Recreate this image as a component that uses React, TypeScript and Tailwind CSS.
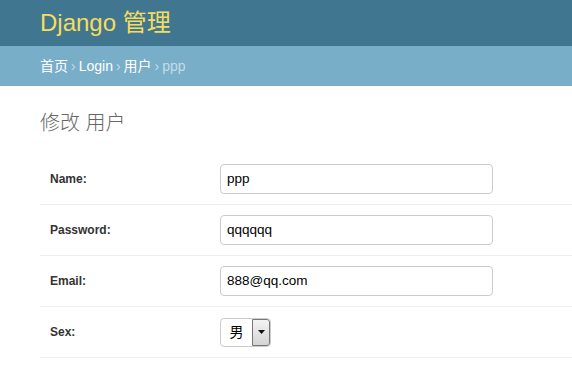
import React from "react";

const font = { fontFamily: '"Liberation Sans", Arial, "Noto Sans CJK SC", sans-serif' };

function Row({ label, children }: { label: string; children: React.ReactNode }) {
  return (
    <div className="flex items-center h-[51px] pl-[10px] border-b border-[#eee]">
      <label className="w-[170px] text-[12px] font-bold text-[#333]">{label}</label>
      {children}
    </div>
  );
}

function TextInput({ value }: { value: string }) {
  return (
    <div className="w-[273px] h-[30px] border border-[#ccc] rounded-[4px] bg-white flex items-center px-[6px] text-[13.5px] text-black">
      {value}
    </div>
  );
}

export default function App() {
  return (
    <div className="w-[572px] h-[367px] bg-white overflow-hidden" style={font}>
      <div className="h-[46px] bg-[#417690] flex items-center pl-[40px]">
        <span className="text-[24px] text-[#f5dd5d] leading-none">Django 管理</span>
      </div>
      <div className="h-[40px] bg-[#79aec8] flex items-center pl-[40px] text-[14px] text-white">
        <span>首页</span>
        <span className="mx-[3px] text-[#c4dce8]">›</span>
        <span>Login</span>
        <span className="mx-[3px] text-[#c4dce8]">›</span>
        <span>用户</span>
        <span className="mx-[3px] text-[#c4dce8]">›</span>
        <span className="text-[#c4dce8]">ppp</span>
      </div>
      <div className="pl-[40px]">
        <h1 className="text-[20px] text-[#666] font-light pt-[22px] h-[68px]">修改 用户</h1>
        <div>
          <Row label="Name:">
            <TextInput value="ppp" />
          </Row>
          <Row label="Password:">
            <TextInput value="qqqqqq" />
          </Row>
          <Row label="Email:">
            <TextInput value="888@qq.com" />
          </Row>
          <Row label="Sex:">
            <div className="w-[51px] h-[29px] border border-[#ccc] rounded-[4px] bg-white flex items-stretch overflow-hidden">
              <div className="flex-1 flex items-center justify-center text-[14px] text-black">男</div>
              <div className="w-[18px] border border-[#777] bg-gradient-to-b from-[#f4f4f4] to-[#d4d4d4] flex items-center justify-center rounded-r-[3px]">
                <svg width="7" height="4" viewBox="0 0 7 4">
                  <path d="M0 0H7L3.5 4Z" fill="#111" />
                </svg>
              </div>
            </div>
          </Row>
        </div>
      </div>
    </div>
  );
}
